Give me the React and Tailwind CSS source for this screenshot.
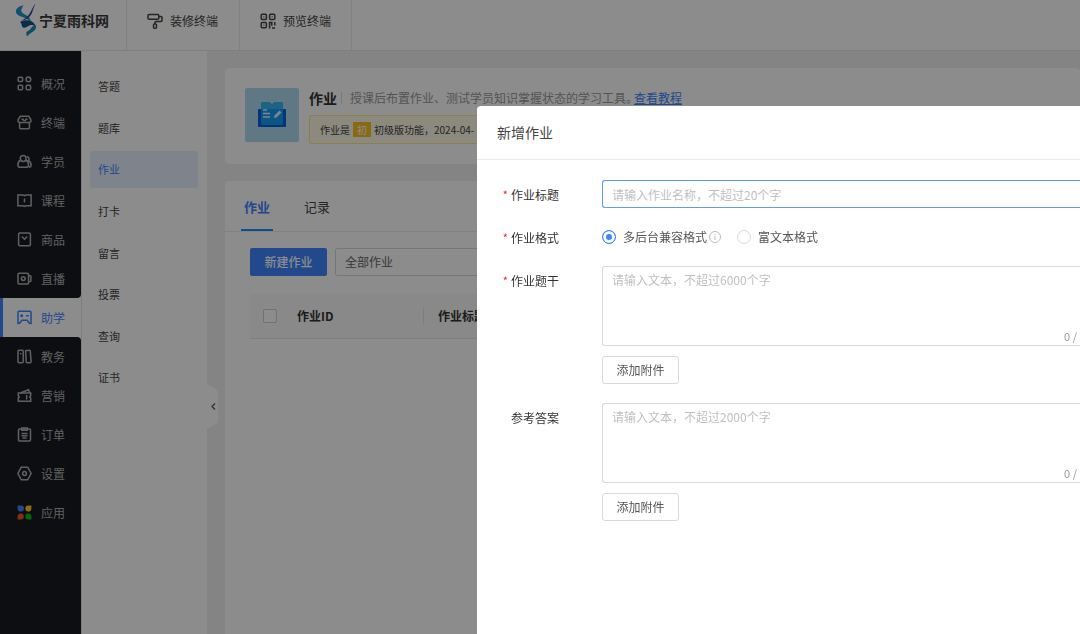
import React, { useState } from "react";

// Left navigation
const navItems = [
  { name: "概况", icon: "overview" },
  { name: "终端", icon: "shop" },
  { name: "学员", icon: "users" },
  { name: "课程", icon: "book" },
  { name: "商品", icon: "goods" },
  { name: "直播", icon: "live" },
  { name: "助学", icon: "game" },
  { name: "教务", icon: "files" },
  { name: "营销", icon: "wallet" },
  { name: "订单", icon: "order" },
  { name: "设置", icon: "setting" },
  { name: "应用", icon: "apps" },
];

const subItems = ["答题", "题库", "作业", "打卡", "留言", "投票", "查询", "证书"];

const navIcons = {
  overview: (
    <>
      <rect x="1.2" y="1.2" width="4.4" height="4.4" rx="1" />
      <circle cx="11.4" cy="3.4" r="2.3" />
      <rect x="1.2" y="9.3" width="4.4" height="4.4" rx="1" />
      <rect x="9.2" y="9.3" width="4.4" height="4.4" rx="1" />
    </>
  ),
  shop: (
    <>
      <path d="M3.2 1.2h8.6l2.2 3.9a2 2 0 0 1-2 2.400H3a2 2 0 0 1-2-2.400z" />
      <path d="M2.600 7.400v5.300a1 1 0 0 0 1 1h7.800a1 1 0 0 0 1-1V7.400" />
      <path d="M4.500 4.300h1.600c.2 1.800 2.600 1.800 2.800 0h1.600" />
    </>
  ),
  users: (
    <>
      <circle cx="6.200" cy="4.500" r="2.900" />
      <path d="M3.600 6.300C2 7 .9 8.800.9 11c0 1.300.8 2.200 2 2.200h6.800c1.200 0 1.800-.9 1.800-2.200 0-2.200-1-4-2.700-4.700" />
      <path d="M9.800 2.800c2-.3 3.100 2.500 1.400 3.900 1.800.6 2.900 2.200 2.900 4.300 0 1.200-.8 2.200-2.200 2.200" />
    </>
  ),
  book: (
    <>
      <path d="M.9 2h4.600c.8 0 1.500.3 2 .7.5-.4 1.200-.7 2-.7h4.600v10.800H9.500c-.8 0-1.500.2-2 .6-.5-.4-1.200-.6-2-.6H.9z" />
      <path d="M7.500 5.500v4" />
    </>
  ),
  goods: (
    <>
      <rect x="1.600" y="1" width="11.800" height="12.800" rx="1.200" />
      <path d="M4.800 4.500l2.700 2.700 2.700-2.700" />
    </>
  ),
  live: (
    <>
      <rect x="1" y="2.200" width="10.500" height="10.800" rx="1" />
      <circle cx="6.300" cy="7.600" r="1.900" />
      <path d="M11.500 4.200l2.400 1v4.900l-2.400 1" />
    </>
  ),
  game: (
    <>
      <path d="M2 1.300h11a1 1 0 0 1 1 1v11.200l-1.600-.2-2.200-3H4.800l-2.200 3-1.600.2V2.300a1 1 0 0 1 1-1z" />
      <path d="M3.200 5.800h3M4.700 4.300v3M9 5.800h2.800" />
    </>
  ),
  files: (
    <>
      <rect x="1" y="1.300" width="5.200" height="12.400" rx="1" />
      <path d="M8.600 1.700l3.600-.4a1 1 0 0 1 1.100.9l.8 10.400a1 1 0 0 1-.9 1.100h-3a1 1 0 0 1-1-1z" />
      <path d="M3.600 4v1.400" />
    </>
  ),
  wallet: (
    <>
      <path d="M1.300 5.100h12.400v2.600l-1 1.200 1 1.200v3.200H1.300v-3.200l1-1.200-1-1.200z" />
      <path d="M3.300 5l8.200-3.300 1.300 3.300M9.600 7v4.500" />
    </>
  ),
  order: (
    <>
      <rect x="1.500" y="2" width="12" height="12" rx="1" />
      <path d="M4.800 1h5.400v2.300H4.800zM4.500 6.600h6M4.500 8.800h6M5.500 11h4" />
    </>
  ),
  setting: (
    <>
      <path d="M4.300 1.200h6.400l3.400 6.300-3.400 6.300H4.300L.9 7.500z" />
      <circle cx="7.500" cy="7.500" r="1.900" />
    </>
  ),
  apps: (
    <g stroke="none">
      <path fill="#3d85ff" d="M.6.6H4a3 3 0 0 1 3 3 3 3 0 0 1-3 3A3.400 3.400 0 0 1 .6 3.200z" />
      <path fill="#ffc71f" d="M14.400.6H11.300a3 3 0 0 0-3 3 3 3 0 0 0 3 3 3.100 3.100 0 0 0 3.100-3.100z" />
      <path fill="#f6502e" d="M.6 14.400h3.100a3 3 0 0 0 3.100-3 3 3 0 0 0-3-3 3.200 3.200 0 0 0-3.200 3.200z" />
      <path fill="#0fb913" d="M14.400 14.400h-3.100a3 3 0 0 1-3-3 3 3 0 0 1 3-3 3.100 3.100 0 0 1 3.100 3.100z" />
    </g>
  ),
};

const NavIcon = ({ name }) => (
  <svg
    className="w-[15px] h-[15px] shrink-0"
    viewBox="0 0 15 15"
    fill="none"
    stroke="currentColor"
    strokeWidth="1.5"
    aria-hidden="true"
  >
    {navIcons[name]}
  </svg>
);

const Header = () => (
  <header className="flex h-[51px] shrink-0 bg-white border-b border-[#e8e8e8] text-[#444]">
    <div className="flex items-center w-[126px] h-10 pl-[15px] gap-[2px] shrink-0">
      <svg className="w-[22px] h-[34px]" viewBox="0 0 22 34" aria-hidden="true">
        <path fill="#1a93c8" d="M8.500 2.200C4 3 .6 5.500 1 9c.3 2.600 3.500 4 7 5.300 3 1.100 6 2.300 8 5.200-.2-4.500-3.500-6.500-6.500-8.200C7 10 5.500 8.500 6.500 6c.5-1.400 1.500-2.600 2-3.800z" />
        <path fill="#3a4f8f" d="M20.500.5c-2 2.300-3.300 5.300-5 8.500-1.500 3-4 6-9.500 9 5-.8 9-3.500 11-8C18 7 19 3.800 20.500.5z" />
        <path fill="#14528c" d="M5 19c3.500-1.800 8-2.500 12-.5 2 1.500 3.500 3.500 4 5.500-2-1.800-4-2.300-6-1.800-2.500.8-4 3-6.500 2.500C6 24 7.500 21 5 19z" />
        <path fill="#158ac0" d="M21 22.500c.5 4-2 5.500-4.500 7-1.500 1-3 2.500-4.500 4-.5-1.800-1-3-.5-4.500 1.500-1.500 4-2 5-4.500.5-1.300 2.500-2 4.500-2z" />
      </svg>
      <span className="text-[14px] leading-5 font-bold text-[#3a3a3a]">宁夏雨科网</span>
    </div>
    <nav className="flex text-[12px]">
      <a href="#decorate" className="flex items-center w-[113px] pb-2 pl-5 gap-[7px] border-l border-[#ebebeb]">
        <svg className="w-4 h-4" viewBox="0 0 16 16" fill="none" stroke="currentColor" strokeWidth="1.5" aria-hidden="true">
          <rect x="1" y="1.500" width="10.800" height="4.800" rx="1.200" />
          <path d="M11.800 3.500H14a1 1 0 0 1 1 1v3a1 1 0 0 1-1 1H9a1 1 0 0 0-1 1v1.500" />
          <rect x="6.500" y="11" width="3" height="4.200" rx="1" />
        </svg>
        装修终端
      </a>
      <a href="#preview" className="flex items-center w-[113px] pb-2 pl-5 gap-[7px] border-x border-[#ebebeb]">
        <svg className="w-4 h-4" viewBox="0 0 16 16" fill="none" stroke="currentColor" strokeWidth="1.500" aria-hidden="true">
          <rect x="1.200" y="1.200" width="5.200" height="5.200" rx="1" />
          <rect x="9.600" y="1.200" width="5.200" height="5.200" rx="1" />
          <rect x="1.200" y="9.600" width="5.200" height="5.200" rx="1" />
          <path d="M9.600 15.500V9.600h2.200v3.200M14.800 9v3.500M12 15h3M3.800 3.400v.8M12.200 3.400v.8M3.800 11.800v.8" />
        </svg>
        预览终端
      </a>
    </nav>
  </header>
);

const Sidebar = () => {
  const current = 6;
  return (
    <nav className="flex flex-col w-[81px] shrink-0 text-[12px] text-[#b0b0b0] bg-white">
      {navItems.map((item, index) => (
        <a
          key={item.name}
          href={`#${item.icon}`}
          className={`flex items-center shrink-0 gap-[9px] ${
            index === current
              ? "h-[39px] border-l-[3px] border-[#3d85ff] pl-[14px] text-[#3d85ff]"
              : index === 0
                ? "h-[52px] pl-[17px] pt-[13px] bg-[#191b21]"
                : "h-[39px] pl-[17px] bg-[#191b21]"
          } ${index === current - 1 ? "rounded-br" : ""} ${
            index === current + 1 ? "rounded-tr" : ""
          }`}
        >
          <NavIcon name={item.icon} />
          {item.name}
        </a>
      ))}
      <div className="flex-1 bg-[#191b21]" />
    </nav>
  );
};

const SubMenu = () => (
  <aside className="relative w-[126px] shrink-0 bg-white border-l border-[#e5e5e5] pt-[17px] pl-2 pr-[9px]">
    <nav className="flex flex-col justify-between h-[328px] text-[11px] text-[#444]">
      {subItems.map((name) => (
        <a
          key={name}
          href={`#${name}`}
          className={`flex items-center h-[37px] pl-2 rounded-xs ${
            name === "作业" ? "bg-[#e6efff] text-[#3d85ff]" : ""
          }`}
        >
          {name}
        </a>
      ))}
    </nav>
    {/* collapse handle */}
    <button
      type="button"
      aria-label="收起菜单"
      className="absolute left-full top-[333px] w-3 h-[45px]"
    >
      <svg className="w-3 h-[45px]" viewBox="0 0 12 45" aria-hidden="true">
        <path d="M0 0l9 5q2 1 2 4v27q0 3-2 4l-9 5z" fill="#fff" />
        <path d="M8 19.500l-3 3 3 3" fill="none" stroke="#555" strokeWidth="1.200" />
      </svg>
    </button>
  </aside>
);

const Main = () => (
  <main className="flex-1 min-w-0 flex flex-col pl-[18px] pt-[17px] bg-[#f0f0f2]">
    <section className="flex gap-[10px] p-5 h-24 shrink-0 bg-white rounded">
      <div className="flex items-center justify-center w-[54px] h-[54px] shrink-0 rounded-xs bg-[#b0daf0]">
        <svg className="w-7 h-[26px]" viewBox="0 0 28 26" aria-hidden="true">
          <rect y="7" width="28" height="18" rx="1" fill="#0b62d8" />
          <path d="M3 1.500Q3 0 4.500 0h7l2.500 2.500L16.500 0h7Q25 0 25 1.500V22q0 1-1 1H4q-1 0-1-1z" fill="#169bf5" />
          <path d="M3 1.500Q3 0 4.500 0h7l2.500 2.500L16.500 0h7Q25 0 25 1.500V7H3z" fill="#35b5f5" />
          <path d="M5 8h4M5 11.500h7M5 15h7" stroke="#e4f4ff" strokeWidth="1.500" />
          <path d="M16 16l.5-2.500 5-5 2 2-5 5z" fill="#e4f4ff" />
        </svg>
      </div>
      <div className="flex-1 min-w-0">
        <div className="flex items-center h-5 mb-[7px] text-[12px] text-[#999] whitespace-nowrap">
          <h1 className="text-[14px] leading-5 font-bold text-[#333]">作业</h1>
          <span className="w-px h-3 ml-1 mr-2 bg-[#ddd]" />
          授课后布置作业、测试学员知识掌握状态的学习工具。
          <a href="#help" className="-ml-1 text-[#3d85ff] underline">
            查看教程
          </a>
        </div>
        <div className="flex items-center h-[29px] pl-[10px] gap-[3px] w-80 border border-[#ffe58f] rounded-xs bg-[#fffbe6] text-[10px] text-[#444] whitespace-nowrap">
          作业是
          <span className="w-[18px] h-[15px] leading-[15px] text-center bg-[#fbc11e] text-white">
            初
          </span>
          初级版功能，2024-04-
        </div>
      </div>
    </section>

    <section className="flex-1 mt-[17px] bg-white rounded-t">
      <div className="flex gap-7 h-[51px] pl-4 border-b border-[#ebebeb] text-[13px] text-[#444]">
        <button type="button" className="w-8 h-[50px] pt-1 border-b-2 border-[#1890ff] font-bold text-[#3d85ff]">
          作业
        </button>
        <button type="button" className="w-8 h-[50px] pt-1 border-b-2 border-transparent">
          记录
        </button>
      </div>
      <div className="pl-[25px] pt-4">
        <div className="flex gap-2">
          <button type="button" className="w-[77px] h-7 shrink-0 rounded-xs bg-[#3d85ff] text-[12px] font-medium text-white">
            新建作业
          </button>
          <select
            aria-label="作业范围"
            className="w-[220px] h-7 px-[9px] appearance-none border border-[#d9d9d9] rounded-xs text-[12px] text-[#666]"
          >
            <option>全部作业</option>
          </select>
        </div>
        <table className="w-full mt-[18px] table-fixed text-[12px] text-left text-[#333]">
          <thead>
            <tr className="h-11 bg-[#fafafa] border-b border-[#e5e5e5]">
              <th className="w-[47px] pl-[13px]">
                <input
                  type="checkbox"
                  aria-label="全选"
                  className="block w-[14px] h-[14px] appearance-none border border-[#d0d0d0] rounded-xs bg-white"
                />
              </th>
              <th className="w-[141px]">
                <div className="flex justify-between items-center">
                  作业ID
                  <span className="w-px h-4 mr-[14px] bg-[#e5e5e5]" />
                </div>
              </th>
              <th>作业标题</th>
            </tr>
          </thead>
        </table>
      </div>
    </section>
  </main>
);

// Label on the left, control on the right
const FormRow = ({ label, htmlFor, required, children }) => (
  <div className="flex gap-[43px]">
    <label htmlFor={htmlFor} className="flex items-center justify-end w-[82px] h-7 pt-px shrink-0 text-[#333]">
      {required && <span className="mr-[3px] text-[11px] text-[#f5222d]">*</span>}
      {label}
    </label>
    <div className="flex-1 min-w-0">{children}</div>
  </div>
);

const TextBlock = ({ id, placeholder }) => (
  <>
    <div className="relative">
      <textarea
        id={id}
        placeholder={placeholder}
        className="block w-full h-20 px-[9px] py-1 leading-[18px] resize-none outline-none border border-r-0 border-[#d9d9d9] rounded-l-[3px] placeholder:text-[#bfbfbf]"
      />
      <span className="absolute right-[3px] bottom-[2px] text-[11px] leading-4 text-[#999]">0 /</span>
    </div>
    <button
      type="button"
      className="w-[77px] h-7 mt-[10px] border border-[#d9d9d9] rounded-[3px] text-[#555]"
    >
      添加附件
    </button>
  </>
);

const HomeworkModal = () => {
  const [format, setFormat] = useState("multi");

  const radioClass =
    "w-[14px] h-[14px] appearance-none rounded-full border border-[#d9d9d9] bg-white checked:border-[#3d85ff] checked:bg-[#3d85ff] checked:shadow-[inset_0_0_0_3px_#fff]";

  return (
    <div className="fixed inset-0 flex pl-[477px] pt-[106px] bg-black/45">
      <div role="dialog" aria-labelledby="modal-title" className="flex-1 min-w-0 bg-white rounded-tl text-[12px]">
        <div className="flex items-center h-[54px] pl-5 border-b border-[#ebebeb]">
          <h2 id="modal-title" className="text-[14px] text-[#444]">
            新增作业
          </h2>
        </div>
        <form className="flex flex-col gap-[15px] pt-5">
          <FormRow label="作业标题" htmlFor="title" required>
            <input
              id="title"
              type="text"
              placeholder="请输入作业名称，不超过20个字"
              className="block w-full h-7 px-[9px] outline-none border border-r-0 border-[#5b9aff] rounded-l-[3px] placeholder:text-[#bfbfbf]"
            />
          </FormRow>
          <FormRow label="作业格式" htmlFor="multi" required>
            <div className="flex items-center h-7 text-[#555]">
              <input
                id="multi"
                type="radio"
                name="format"
                checked={format === "multi"}
                onChange={() => setFormat("multi")}
                className={radioClass}
              />
              <label htmlFor="multi" className="ml-[7px]">
                多后台兼容格式
              </label>
              <svg className="w-3 h-3 ml-[2px]" viewBox="0 0 12 12" fill="none" stroke="#bbb" aria-hidden="true">
                <circle cx="6" cy="6" r="5.500" />
                <path d="M6 5v4M6 3v1" />
              </svg>
              <input
                id="rich"
                type="radio"
                name="format"
                checked={format === "rich"}
                onChange={() => setFormat("rich")}
                className={`ml-4 ${radioClass}`}
              />
              <label htmlFor="rich" className="ml-[7px]">
                富文本格式
              </label>
            </div>
          </FormRow>
          <FormRow label="作业题干" htmlFor="content" required>
            <TextBlock id="content" placeholder="请输入文本，不超过6000个字" />
          </FormRow>
          <div className="mt-1">
            <FormRow label="参考答案" htmlFor="answer">
              <TextBlock id="answer" placeholder="请输入文本，不超过2000个字" />
            </FormRow>
          </div>
        </form>
      </div>
    </div>
  );
};

const App = () => {
  return (
    <div className="flex flex-col h-screen overflow-hidden font-['Noto_Sans_CJK_SC','Noto_Sans',sans-serif]">
      <Header />
      <div className="flex flex-1 min-h-0">
        <Sidebar />
        <SubMenu />
        <Main />
      </div>
      <HomeworkModal />
    </div>
  );
};

export default App;
